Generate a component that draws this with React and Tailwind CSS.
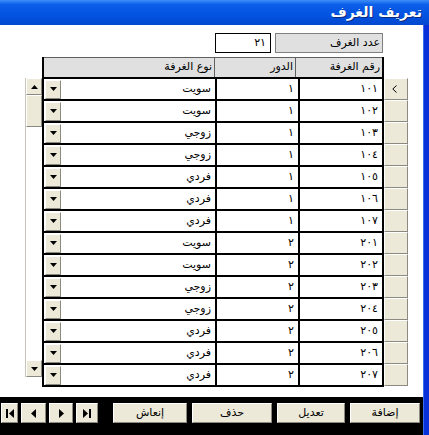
import React from "react";

const rooms = [
  ["١٠١", "١", "سويت"],
  ["١٠٢", "١", "سويت"],
  ["١٠٣", "١", "زوجي"],
  ["١٠٤", "١", "زوجي"],
  ["١٠٥", "١", "فردي"],
  ["١٠٦", "١", "فردي"],
  ["١٠٧", "١", "فردي"],
  ["٢٠١", "٢", "سويت"],
  ["٢٠٢", "٢", "سويت"],
  ["٢٠٣", "٢", "زوجي"],
  ["٢٠٤", "٢", "زوجي"],
  ["٢٠٥", "٢", "فردي"],
  ["٢٠٦", "٢", "فردي"],
  ["٢٠٧", "٢", "فردي"],
];

function Tri({ dir = "down", big = false }) {
  if (dir === "down" || dir === "up") {
    const pts = dir === "down" ? "0,0 7,0 3.5,4" : "0,4 7,4 3.5,0";
    return (
      <svg viewBox="0 0 7 4" className="w-[7px] h-[4px]">
        <polygon points={pts} fill="#000" />
      </svg>
    );
  }
  const pts = dir === "left" ? "5,0 5,9 0,4.5" : "0,0 0,9 5,4.5";
  return (
    <svg viewBox="0 0 5 9" className={big ? "w-[5px] h-[9px]" : "w-[4px] h-[7px]"}>
      <polygon points={pts} fill="#000" />
    </svg>
  );
}

// current-record pointer
function Pointer() {
  return (
    <svg viewBox="0 0 5 8" className="w-[5px] h-[8px] -ml-[4px]">
      <polyline points="4.5,0.5 0.8,4 4.5,7.5" fill="none" stroke="#000" strokeWidth="1" />
    </svg>
  );
}

// raised 3D face used by buttons, selectors and drop-down arrows
const raised =
  "bg-[#ece9d8] border border-t-white border-l-white border-r-[#8c8a80] border-b-[#8c8a80]";

function DropButton() {
  return (
    <div className={`w-[16px] h-[19px] my-auto ml-[1px] flex items-center justify-center ${raised}`}>
      <Tri dir="down" />
    </div>
  );
}

function NavButton({ children, w }) {
  return (
    <div className={`${w} h-[20px] flex items-center justify-center ${raised}`}>{children}</div>
  );
}

function CmdButton({ label, w }) {
  return (
    <div dir="rtl" className={`${w} h-[20px] flex items-center justify-center text-[11px] text-black ${raised}`}>
      {label}
    </div>
  );
}

export default function App() {
  return (
    <div className="w-[429px] h-[435px] flex flex-col overflow-hidden bg-white font-['DejaVu_Sans',sans-serif] text-[11px] text-black">
      {/* caption */}
      <div className="h-[25px] shrink-0 flex items-center justify-end pr-[7px] bg-[linear-gradient(to_bottom,#3d8ef8_0%,#0c5fe8_18%,#0454e3_55%,#0349cf_100%)]">
        <span dir="rtl" className="text-white font-bold text-[14px] [text-shadow:1px_1px_0_#0a2a80]">
          تعريف الغرف
        </span>
      </div>

      <div className="flex-1 flex">
        <div className="flex-1 flex flex-col">
          {/* form body */}
          <div className="flex-1 bg-white flex flex-col pt-[8px]">
            <div className="h-[20px] flex justify-end pr-[40px] gap-[4px]">
              <div dir="rtl" className="w-[56px] h-[20px] border border-black bg-white flex items-center pr-[4px]">
                ٢١
              </div>
              <div dir="rtl" className="w-[108px] h-[20px] border border-[#808080] bg-[#e0e0e0] flex items-center pr-[2px]">
                عدد الغرف
              </div>
            </div>

            <div className="mt-[4px] flex pl-[25px]">
              {/* vertical scroll bar */}
              <div className="w-[17px] mt-[21px] h-[299px] flex flex-col border-l border-[#c8c5b8]">
                <div className={`h-[17px] flex items-center justify-center ${raised}`}>
                  <Tri dir="up" />
                </div>
                <div className={`h-[32px] ${raised}`} />
                <div className="flex-1 bg-white" />
                <div className={`h-[17px] flex items-center justify-center ${raised}`}>
                  <Tri dir="down" />
                </div>
              </div>

              {/* records */}
              <div className="w-[342px] border-l-2 border-r-2 border-b-2 border-black">
                <div className="h-[20px] flex bg-[#e0e0e0] border-t border-[#606060]">
                  <div dir="rtl" className="w-[171px] flex items-center pr-[2px] border-r border-[#606060]">
                    نوع الغرفة
                  </div>
                  <div dir="rtl" className="w-[81px] flex items-center pr-[2px] border-r border-[#606060]">
                    الدور
                  </div>
                  <div dir="rtl" className="flex-1 flex items-center pr-[2px]">
                    رقم الغرفة
                  </div>
                </div>
                {rooms.map(([num, floor, type], i) => (
                  <div key={i} className="h-[22px] flex border-t-2 border-black">
                    <div className="w-[171px] flex">
                      <DropButton />
                      <div dir="rtl" className="flex-1 flex items-center pr-[4px]">
                        {type}
                      </div>
                    </div>
                    <div dir="rtl" className="w-[83px] flex items-center pr-[4px] border-l-2 border-black">
                      {floor}
                    </div>
                    <div dir="rtl" className="flex-1 flex items-center pr-[4px] border-l-2 border-black">
                      {num}
                    </div>
                  </div>
                ))}
              </div>

              {/* record selectors */}
              <div className="w-[24px] mt-[21px] flex flex-col">
                {rooms.map((_, i) => (
                  <div key={i} className={`h-[22px] flex items-center justify-center ${raised}`}>
                    {i === 0 ? <Pointer /> : null}
                  </div>
                ))}
              </div>
            </div>
          </div>

          {/* navigation & command strip */}
          <div className="h-[38px] shrink-0 bg-black flex items-start pt-[6px] pl-[1px]">
            <div className="flex gap-[3px]">
              <NavButton w="w-[17px]">
                <div className="flex items-center gap-[1px]">
                  <div className="w-[2px] h-[9px] bg-black" />
                  <Tri dir="left" big />
                </div>
              </NavButton>
              <NavButton w="w-[25px]">
                <Tri dir="left" big />
              </NavButton>
              <NavButton w="w-[24px]">
                <Tri dir="right" big />
              </NavButton>
              <NavButton w="w-[22px]">
                <div className="flex items-center gap-[1px]">
                  <Tri dir="right" big />
                  <div className="w-[2px] h-[9px] bg-black" />
                </div>
              </NavButton>
            </div>
            <div className="ml-[15px] flex gap-[5px]">
              <CmdButton label="إنعاش" w="w-[74px]" />
              <CmdButton label="حذف" w="w-[80px]" />
              <CmdButton label="تعديل" w="w-[68px]" />
              <CmdButton label="إضافة" w="w-[70px]" />
            </div>
          </div>
        </div>

        {/* window frame */}
        <div className="w-[6px] shrink-0 bg-[#0831d9] border-l border-[#3a6ef0]" />
      </div>
    </div>
  );
}
